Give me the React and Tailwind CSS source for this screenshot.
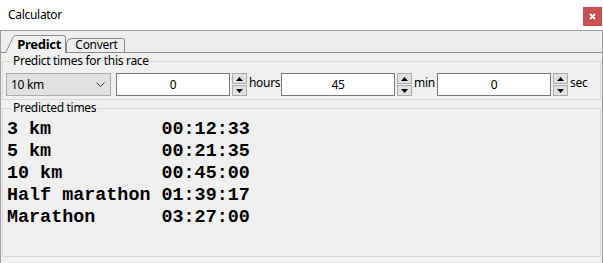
import React from 'react';

const ui = "font-['Segoe_UI','Noto_Sans',sans-serif] tracking-[-0.3px]";

function Spinner() {
  return (
    <div className="flex flex-col gap-[1px] w-[15px] h-[23px] ml-[2px] shrink-0">
      <div className="flex-1 bg-[#e1e1e1] border border-[#adadad] flex items-center justify-center">
        <svg width="7" height="4" viewBox="0 0 7 4"><path d="M0 4 L3.5 0 L7 4 Z" fill="#000" /></svg>
      </div>
      <div className="flex-1 bg-[#e1e1e1] border border-[#adadad] flex items-center justify-center">
        <svg width="7" height="4" viewBox="0 0 7 4"><path d="M0 0 L3.5 4 L7 0 Z" fill="#000" /></svg>
      </div>
    </div>
  );
}

function TimeField({ value, unit, unitWidth }) {
  return (
    <div className="flex items-start shrink-0">
      <div className="w-[114px] h-[23px] bg-white border border-[#7a7a7a] flex items-center justify-center text-[12px] text-black">
        {value}
      </div>
      <Spinner />
      <span
        className="ml-[2px] mt-[2px] text-[12px] text-black leading-[16px] shrink-0"
        style={{ width: unitWidth }}
      >
        {unit}
      </span>
    </div>
  );
}

const results = [
  ['3 km', '00:12:33'],
  ['5 km', '00:21:35'],
  ['10 km', '00:45:00'],
  ['Half marathon', '01:39:17'],
  ['Marathon', '03:27:00'],
];

export default function App() {
  return (
    <div className={`w-[603px] h-[263px] bg-white ${ui} text-[12px] text-black overflow-hidden flex flex-col`}>
      {/* Title bar */}
      <div className="h-[30px] flex items-center justify-between pl-[8px] pr-[1px] shrink-0">
        <span className="text-[12px] leading-none">Calculator</span>
        <div className="w-[19px] h-[19px] bg-[#c75050] flex items-center justify-center mt-[2px]">
          <svg width="7" height="7" viewBox="0 0 7 7">
            <path d="M1 1 L6 6 M6 1 L1 6" stroke="#fff" strokeWidth="1.8" />
          </svg>
        </div>
      </div>

      <div className="flex-1 flex flex-col border-l border-r border-t border-[#a0a0a0]">
        {/* Tab strip */}
        <div className="h-[22px] bg-[#eeeeee] border-b border-[#8c8c8c] flex items-end pl-[4px] shrink-0">
          <div className="relative w-[61px] h-[18px] -mb-[1px] z-10 flex items-center justify-end pr-[5px]">
            <svg className="absolute inset-0" width="61" height="18" viewBox="0 0 61 18">
              <path d="M0.5 18 L8.5 1.5 Q9.2 0.5 10.5 0.5 L58.5 0.5 Q60.5 0.5 60.5 2.5 L60.5 18" fill="#f0f0f0" stroke="#8c8c8c" />
            </svg>
            <span className="relative font-bold text-[13px] leading-none mt-[1px]">Predict</span>
          </div>
          <div className="relative w-[59px] h-[14px] flex items-center justify-center pl-[2px]">
            <svg className="absolute inset-0" width="59" height="14" viewBox="0 0 59 14">
              <path d="M0.5 14 L0.5 4.5 Q1.5 0.5 6 0.5 L56.5 0.5 Q58.5 0.5 58.5 2.5 L58.5 14" fill="#eeeeee" stroke="#8c8c8c" />
            </svg>
            <span className="relative text-[12px] leading-none">Convert</span>
          </div>
        </div>

        {/* Panel */}
        <div className="flex-1 bg-[#f0f0f0] pl-[1px] pr-[1px] flex flex-col">
          <fieldset className="border border-[#d9d9d9] pl-[3px] pr-[3px] pb-[3px] mt-0">
            <legend className="ml-[6px] px-[1px] text-[12px] leading-[16px]">Predict times for this race</legend>
            <div className="flex items-start mt-[4px]">
              <div className="w-[105px] h-[23px] bg-[#e1e1e1] border border-[#adadad] flex items-center justify-between pl-[4px] pr-[5px] mr-[5px] shrink-0">
                <span className="text-[12px]">10 km</span>
                <svg width="9" height="5" viewBox="0 0 9 5">
                  <path d="M0.5 0.5 L4.5 4.5 L8.5 0.5" fill="none" stroke="#333" strokeWidth="1" />
                </svg>
              </div>
              <TimeField value="0" unit="hours" unitWidth={32} />
              <TimeField value="45" unit="min" unitWidth={23} />
              <TimeField value="0" unit="sec" unitWidth={20} />
            </div>
          </fieldset>

          <fieldset className="flex-1 border border-[#d9d9d9] pl-[3px] mb-[6px]">
            <legend className="ml-[6px] px-[1px] text-[12px] leading-[16px]">Predicted times</legend>
            <div className="mt-[3px] ml-[1px] font-['Liberation_Mono','Courier_New',monospace] font-bold text-[18.4px] leading-[22px] tracking-normal whitespace-pre">
              {results.map(([name, time]) => (
                <div key={name}>{name.padEnd(14, ' ') + time}</div>
              ))}
            </div>
          </fieldset>
        </div>
      </div>
    </div>
  );
}
